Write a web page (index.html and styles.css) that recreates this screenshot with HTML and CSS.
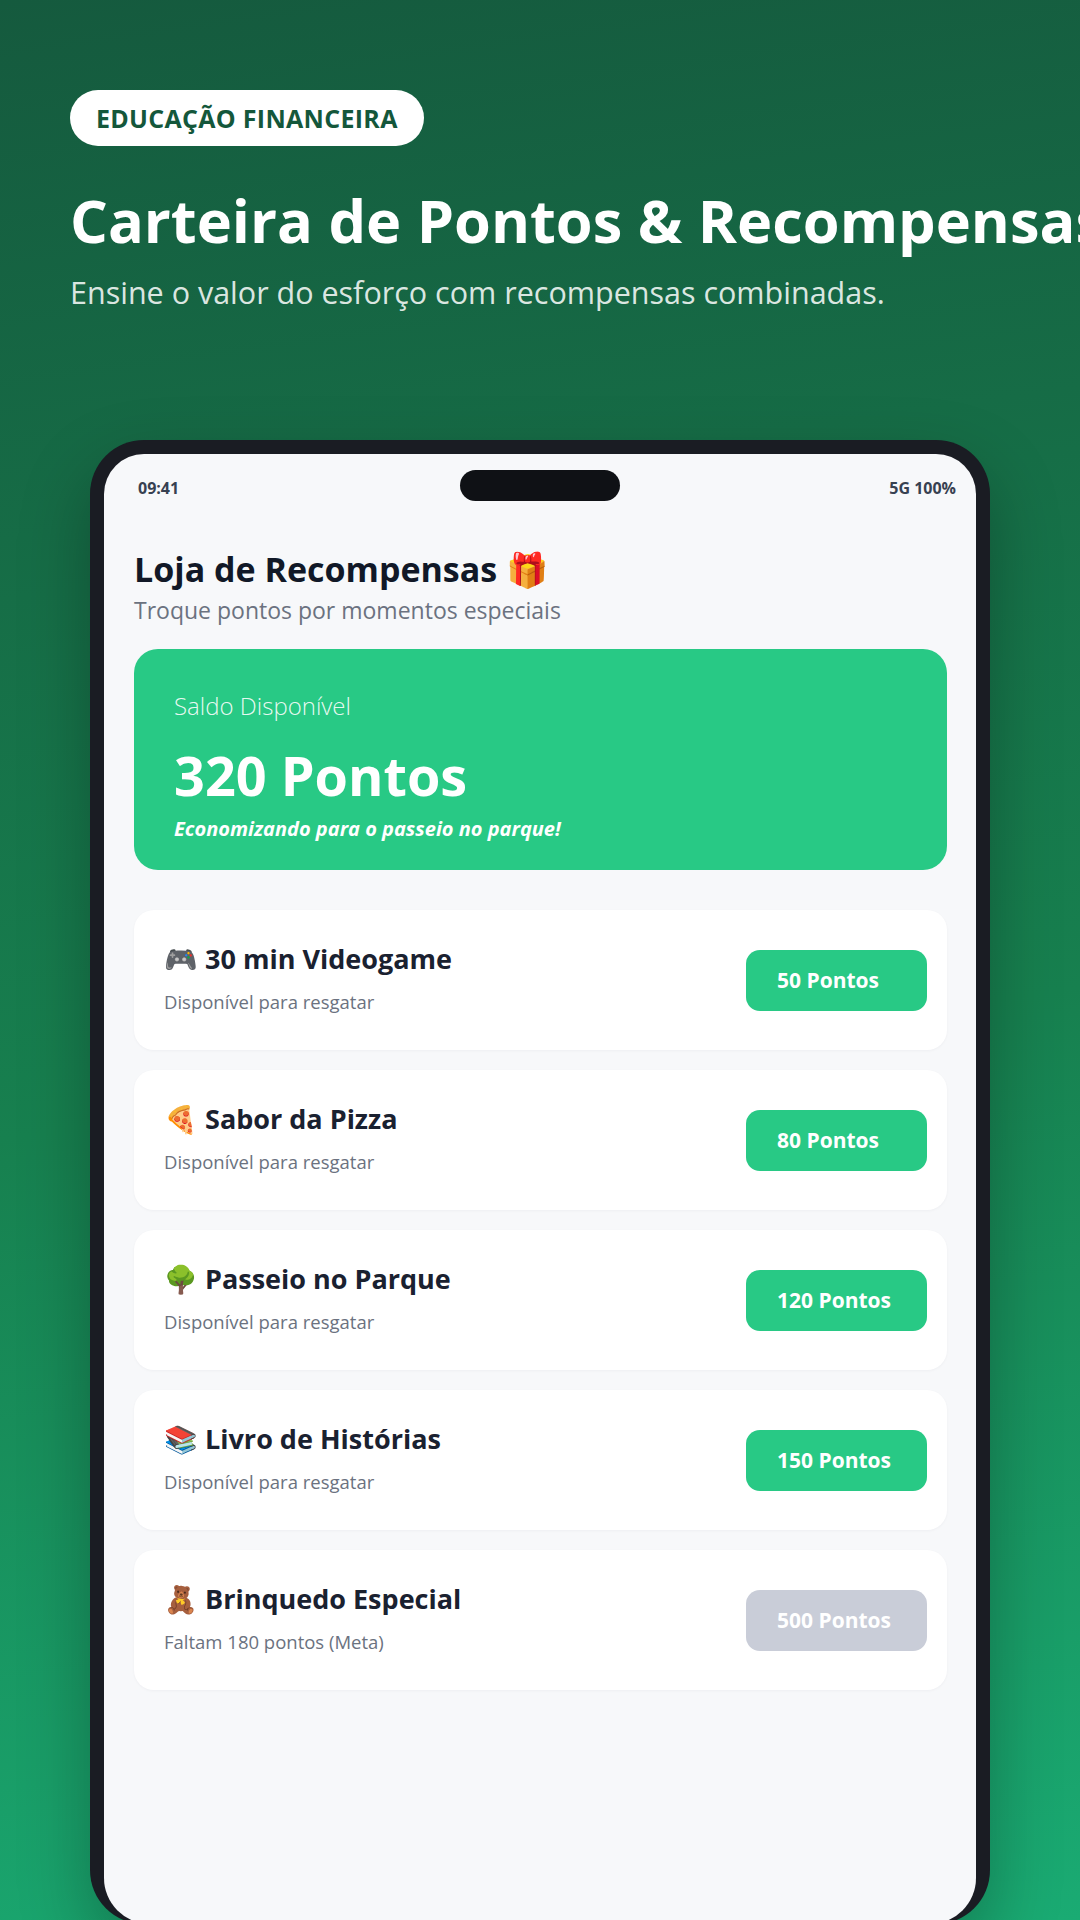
FILE: index.html
```html
<!DOCTYPE html>
<html lang="pt-BR">
<head>
    <meta charset="UTF-8">
    <meta name="viewport" content="width=device-width, initial-scale=1.0">
    <title>Carteira de Pontos &amp; Recompensas</title>
    <link rel="stylesheet" href="styles.css">
</head>
<body>
    <div class="hero">
        <span class="badge">EDUCAÇÃO FINANCEIRA</span>
        <h1>Carteira de Pontos &amp; Recompensas</h1>
        <p class="hero-sub">Ensine o valor do esforço com recompensas combinadas.</p>
    </div>

    <div class="phone">
        <div class="screen">
            <div class="status-bar">
                <span>09:41</span>
                <span>5G 100%</span>
            </div>
            <div class="island"></div>

            <div class="app">
                <h2>Loja de Recompensas 🎁</h2>
                <p class="app-sub">Troque pontos por momentos especiais</p>

                <div class="balance">
                    <p class="balance-label">Saldo Disponível</p>
                    <p class="balance-value">320 Pontos</p>
                    <p class="balance-goal">Economizando para o passeio no parque!</p>
                </div>

                <div class="rewards">
                    <div class="reward">
                        <div class="reward-info">
                            <h3>🎮 30 min Videogame</h3>
                            <p>Disponível para resgatar</p>
                        </div>
                        <button class="redeem">50 Pontos</button>
                    </div>
                    <div class="reward">
                        <div class="reward-info">
                            <h3>🍕 Sabor da Pizza</h3>
                            <p>Disponível para resgatar</p>
                        </div>
                        <button class="redeem">80 Pontos</button>
                    </div>
                    <div class="reward">
                        <div class="reward-info">
                            <h3>🌳 Passeio no Parque</h3>
                            <p>Disponível para resgatar</p>
                        </div>
                        <button class="redeem">120 Pontos</button>
                    </div>
                    <div class="reward">
                        <div class="reward-info">
                            <h3>📚 Livro de Histórias</h3>
                            <p>Disponível para resgatar</p>
                        </div>
                        <button class="redeem">150 Pontos</button>
                    </div>
                    <div class="reward">
                        <div class="reward-info">
                            <h3>🧸 Brinquedo Especial</h3>
                            <p>Faltam 180 pontos (Meta)</p>
                        </div>
                        <button class="redeem locked">500 Pontos</button>
                    </div>
                </div>
            </div>
        </div>
    </div>
</body>
</html>
```

FILE: styles.css
```css
html, body {
    margin: 0;
    height: 100%;
}
body {
    font-family: 'Open Sans', 'Noto Sans', sans-serif;
    background: linear-gradient(172deg, #155a3e 0%, #17804f 55%, #1aab73 100%);
    color: #FFF;
    overflow: hidden;
}
p, h1, h2, h3 {
    margin: 0;
}
.hero {
    display: flex;
    flex-direction: column;
    align-items: flex-start;
    padding: 90px 0 0 70px;
}
.badge {
    height: 56px;
    line-height: 56px;
    padding: 0 26px;
    border-radius: 28px;
    background-color: #FFF;
    color: #14573b;
    font-size: 25px;
    font-weight: 700;
    letter-spacing: 0.3px;
}
.hero h1 {
    margin-top: 38px;
    font-size: 59.5px;
    line-height: 1.2;
    font-weight: 700;
    white-space: nowrap;
}
.hero-sub {
    margin-top: 18px;
    font-size: 30.5px;
    line-height: 1.3;
    color: rgba(255, 255, 255, 0.86);
}
.phone {
    width: 900px;
    height: 1484px;
    margin: 127px auto 0;
    padding: 14px 14px 0;
    box-sizing: border-box;
    background-color: #1a1c23;
    border-radius: 54px;
    overflow: hidden;
    box-shadow: 0 30px 70px rgba(0, 0, 0, 0.28);
}
.screen {
    position: relative;
    height: 100%;
    background-color: #f7f8fa;
    border-radius: 40px 40px 46px 46px;
    overflow: hidden;
}
.status-bar {
    display: flex;
    justify-content: space-between;
    padding: 24px 20px 0 34px;
    font-size: 16px;
    line-height: 20px;
    font-weight: 700;
    color: #374151;
}
.island {
    position: absolute;
    top: 16px;
    left: 50%;
    width: 160px;
    height: 31px;
    margin-left: -80px;
    border-radius: 16px;
    background-color: #0f1115;
}
.app {
    padding: 51px 29px 0 30px;
}
.app h2 {
    font-size: 34px;
    line-height: 1.2;
    font-weight: 700;
    color: #111827;
}
.app-sub {
    margin-top: 4px;
    font-size: 23px;
    line-height: 1.4;
    color: #6b7280;
}
.balance {
    margin-top: 23px;
    padding: 40px 40px 27px;
    border-radius: 24px;
    background-color: #28c985;
}
.balance-label {
    font-size: 24px;
    line-height: 1.4;
    font-weight: 300;
    color: rgba(255, 255, 255, 0.9);
}
.balance-value {
    margin-top: 20px;
    font-size: 54px;
    line-height: 1.2;
    font-weight: 700;
}
.balance-goal {
    margin-top: 8px;
    font-size: 20px;
    line-height: 1.4;
    font-weight: 700;
    font-style: italic;
}
.rewards {
    display: flex;
    flex-direction: column;
    gap: 20px;
    margin-top: 40px;
}
.reward {
    display: flex;
    align-items: center;
    justify-content: space-between;
    height: 140px;
    padding: 0 20px 5px 30px;
    box-sizing: border-box;
    background-color: #FFF;
    border-radius: 20px;
    box-shadow: 0 1px 3px rgba(17, 24, 39, 0.04);
}
.reward-info h3 {
    font-size: 27px;
    line-height: 1.3;
    font-weight: 700;
    color: #1a2130;
}
.reward-info p {
    margin-top: 12px;
    font-size: 18.5px;
    line-height: 1.4;
    color: #6b7280;
}
.redeem {
    width: 181px;
    height: 61px;
    margin-top: 5px;
    padding: 0 0 0 31px;
    border: none;
    border-radius: 14px;
    background-color: #28c985;
    color: #FFF;
    font-family: inherit;
    font-size: 21px;
    font-weight: 700;
    text-align: left;
    cursor: pointer;
}
.redeem.locked {
    background-color: #c9cdd8;
    cursor: default;
}
```
